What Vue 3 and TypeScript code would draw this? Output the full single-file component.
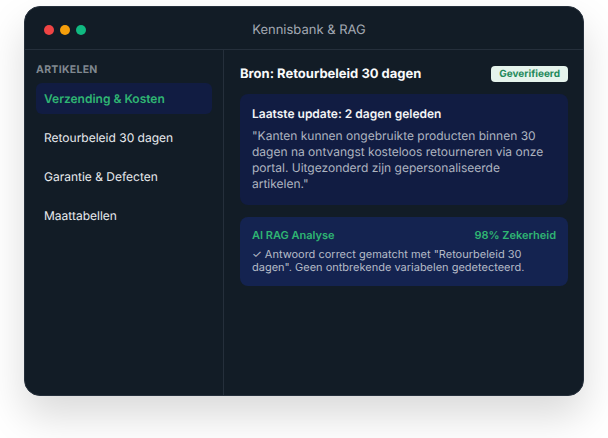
<script setup lang="ts">
const articles: string[] = ['Verzending & Kosten', 'Retourbeleid 30 dagen', 'Garantie & Defecten', 'Maattabellen']
</script>

<template>
  <div class="page">
    <div class="window">
      <header class="titlebar">
        <div class="dots">
          <span class="dot red"></span>
          <span class="dot amber"></span>
          <span class="dot green"></span>
        </div>
        <div class="title">Kennisbank &amp; RAG</div>
      </header>
      <div class="body">
        <aside class="sidebar">
          <div class="side-label">ARTIKELEN</div>
          <div class="side-list">
            <div v-for="(a, i) in articles" :key="a" class="side-item" :class="{ active: i === 0 }">{{ a }}</div>
          </div>
        </aside>
        <main class="main">
          <div class="main-head">
            <div class="source">Bron: Retourbeleid 30 dagen</div>
            <div class="badge">Geverifieerd</div>
          </div>
          <section class="card quote">
            <div class="card-title">Laatste update: 2 dagen geleden</div>
            <p class="quote-text">"Kanten kunnen ongebruikte producten binnen 30 dagen na ontvangst kosteloos retourneren via onze portal. Uitgezonderd zijn gepersonaliseerde artikelen."</p>
          </section>
          <section class="card analysis">
            <div class="analysis-head">
              <span>AI RAG Analyse</span>
              <span>98% Zekerheid</span>
            </div>
            <p class="analysis-text">✓ Antwoord correct gematcht met "Retourbeleid 30 dagen". Geen ontbrekende variabelen gedetecteerd.</p>
          </section>
        </main>
      </div>
    </div>
  </div>
</template>

<style>
html, body { margin: 0; background: #fff; }
</style>

<style scoped>
.page {
  width: 608px;
  height: 438px;
  padding: 6px 24px 0;
  box-sizing: border-box;
  overflow: hidden;
  font-family: Inter, "Liberation Sans", sans-serif;
  text-rendering: geometricPrecision;
}
.window {
  width: 560px;
  height: 390px;
  box-sizing: border-box;
  display: flex;
  flex-direction: column;
  background: #121c26;
  border: 1px solid #252f3b;
  border-radius: 16px;
  box-shadow: 0 20px 40px rgba(0, 0, 0, 0.15);
  overflow: hidden;
}
.titlebar {
  position: relative;
  flex: none;
  height: 38px;
  padding: 4px 0 0 10px;
  display: flex;
  align-items: center;
  justify-content: center;
  border-bottom: 1px solid #252f3b;
}
.dots {
  position: absolute;
  left: 19px;
  top: 18px;
  display: flex;
  gap: 6px;
}
.dot { width: 10px; height: 10px; border-radius: 50%; }
.red { background: #ef4444; }
.amber { background: #f59e0b; }
.green { background: #10b981; }
.title { font-size: 13px; font-weight: 400; color: #a3a9b3; }
.body { flex: 1; display: flex; min-height: 0; }
.sidebar {
  width: 199px;
  flex: none;
  box-sizing: border-box;
  padding: 13px 11px 0 11px;
  border-right: 1px solid #252f3b;
}
.side-label {
  font-size: 10.5px;
  line-height: 13px;
  font-weight: 700;
  color: #808890;
  letter-spacing: 0.3px;
  margin-bottom: 7px;
}
.side-list { display: flex; flex-direction: column; gap: 8px; }
.side-item {
  height: 31px;
  line-height: 31px;
  padding: 0 8px;
  border-radius: 6px;
  font-size: 12px;
  font-weight: 400;
  color: #e8eaee;
}
.side-item.active { background: #111c42; color: #2fb573; font-weight: 600; }
.main {
  flex: 1;
  min-width: 0;
  padding: 16px 15px 0 16px;
  display: flex;
  flex-direction: column;
}
.main-head {
  display: flex;
  justify-content: space-between;
  align-items: center;
  height: 16px;
  margin-bottom: 12px;
}
.source { font-size: 13px; font-weight: 700; color: #f9fafb; }
.badge {
  background: #e5f3ec;
  color: #1f8a5b;
  font-size: 10px;
  font-weight: 700;
  line-height: 16px;
  padding: 0 8px;
  border-radius: 4px;
}
.card { border-radius: 8px; padding: 12px; }
.quote { background: #111c42; margin-bottom: 12px; height: 111px; box-sizing: border-box; }
.card-title { font-size: 12px; font-weight: 600; color: #f3f4f6; line-height: 15px; margin-bottom: 7px; }
.quote-text { margin: 0; font-size: 12px; line-height: 16px; color: #aeb4c0; }
.analysis { background: #142350; height: 69px; box-sizing: border-box; }
.analysis-head {
  display: flex;
  justify-content: space-between;
  font-size: 11px;
  line-height: 13px;
  font-weight: 600;
  color: #2fb573;
  margin-bottom: 6px;
}
.analysis-text { margin: 0; font-size: 11px; line-height: 13px; color: #b6bcc8; }
</style>
